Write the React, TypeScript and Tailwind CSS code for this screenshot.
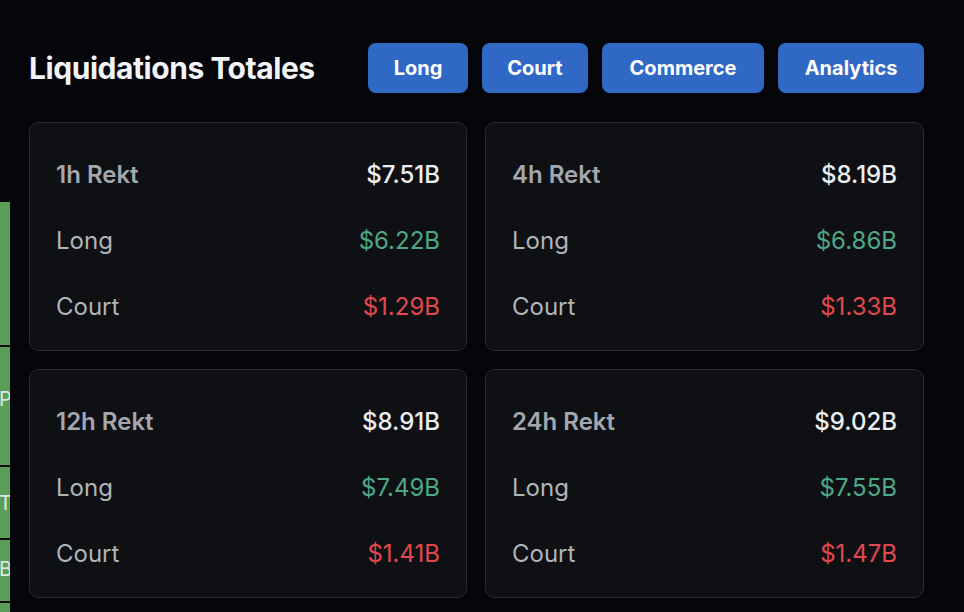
import React from 'react';

type Card = {
  period: string;
  total: string;
  long: string;
  short: string;
};

const CARDS: Card[] = [
  { period: '1h Rekt', total: '$7.51B', long: '$6.22B', short: '$1.29B' },
  { period: '4h Rekt', total: '$8.19B', long: '$6.86B', short: '$1.33B' },
  { period: '12h Rekt', total: '$8.91B', long: '$7.49B', short: '$1.41B' },
  { period: '24h Rekt', total: '$9.02B', long: '$7.55B', short: '$1.47B' },
];

const TABS = [
  { label: 'Long', w: 'w-[100px]' },
  { label: 'Court', w: 'w-[106px]' },
  { label: 'Commerce', w: 'w-[162px]' },
  { label: 'Analytics', w: 'w-[146px]' },
];

const FONT = "font-['Inter','Noto_Sans',sans-serif]";

// bande verte coupée sur le bord gauche (tableau voisin)
function SideStrip() {
  return (
    <div className="w-[10px] shrink-0 overflow-hidden pt-[202px]">
      <div className="h-[143px] bg-[#5a9e58]" />
      <div className="h-[2px] bg-[#0b0c0f]" />
      <div className="h-[118px] bg-[#5a9e58] pt-[40px]">
        <span className="block -ml-[1px] whitespace-nowrap text-[20px] leading-[24px] text-[#dfe6df]">Pr</span>
      </div>
      <div className="h-[2px] bg-[#0b0c0f]" />
      <div className="h-[71px] bg-[#5a9e58] pt-[24px]">
        <span className="block -ml-[1px] whitespace-nowrap text-[20px] leading-[24px] text-[#dfe6df]">TC</span>
      </div>
      <div className="h-[2px] bg-[#0b0c0f]" />
      <div className="h-[61px] bg-[#5a9e58] pt-[17px]">
        <span className="block -ml-[1px] whitespace-nowrap text-[20px] leading-[24px] text-[#dfe6df]">BT</span>
      </div>
      <div className="h-[2px] bg-[#0b0c0f]" />
      <div className="h-[20px] bg-[#5a9e58]" />
    </div>
  );
}

function RektCard({ card }: { card: Card }) {
  return (
    <div className="h-[229px] rounded-[10px] border border-[#2a2d33] bg-[#0e1014] pl-[26px] pr-[26px] pt-[19px]">
      <div className="flex h-[66px] items-center justify-between">
        <span className="text-[24px] font-semibold text-[#a4a7ad]">{card.period}</span>
        <span className="text-[24px] font-medium text-[#eceef1]">{card.total}</span>
      </div>
      <div className="flex h-[66px] items-center justify-between">
        <span className="text-[24px] text-[#b1b4b9]">Long</span>
        <span className="text-[24px] text-[#4ea887]">{card.long}</span>
      </div>
      <div className="flex h-[66px] items-center justify-between">
        <span className="text-[24px] text-[#b1b4b9]">Court</span>
        <span className="text-[24px] text-[#e2484e]">{card.short}</span>
      </div>
    </div>
  );
}

export default function App() {
  return (
    <div className={`flex h-[612px] w-[964px] overflow-hidden bg-[#05060a] ${FONT}`}>
      <SideStrip />
      <div className="ml-[19px] w-[895px] pt-[43px]">
        {/* En-tête */}
        <div className="flex items-center justify-between">
          <h1 className="text-[30px] font-bold tracking-[-0.015em] text-[#f3f4f7]">
            Liquidations Totales
          </h1>
          <div className="flex gap-[14px]">
            {TABS.map((t) => (
              <button
                key={t.label}
                className={`${t.w} h-[50px] rounded-[8px] bg-[#3068c5] text-[20px] font-bold text-white`}
              >
                {t.label}
              </button>
            ))}
          </div>
        </div>

        {/* Cartes */}
        <div className="mt-[29px] grid grid-cols-[438px_439px] gap-[18px]">
          {CARDS.map((c) => (
            <RektCard key={c.period} card={c} />
          ))}
        </div>
      </div>
    </div>
  );
}
